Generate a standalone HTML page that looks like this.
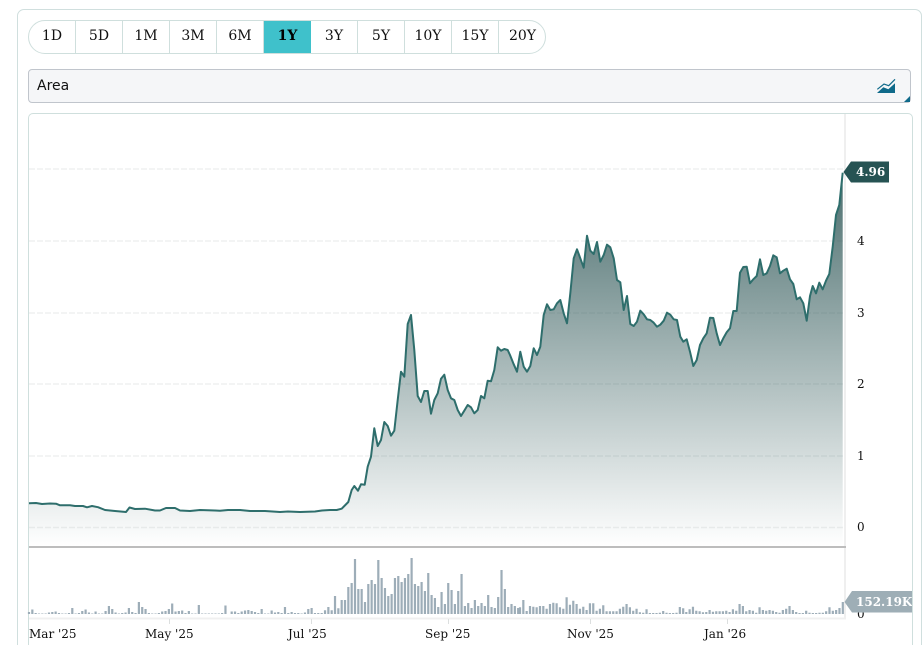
<!DOCTYPE html>
<html><head><meta charset="utf-8"><title>Chart</title>
<style>
html,body{margin:0;padding:0;background:#fff;width:923px;height:645px;overflow:hidden}
#wrap{position:relative;width:923px;height:645px;overflow:hidden;background:#fff}
.a{position:absolute;box-sizing:border-box}
#card{left:17px;top:9px;width:905px;height:660px;border:1px solid #d0dfde;border-radius:7px}
#btns{left:28px;top:20px;height:34px;width:518px;border:1px solid #cfdfdd;border-radius:17px;overflow:hidden;display:flex;background:#fff}
#btns div{width:47px;height:32px;line-height:31px;text-align:center;border-right:1px solid #cfdfdd;box-sizing:border-box;font:14px/31px "DejaVu Serif",serif;color:#111;flex:none}
#btns div:first-child{width:47px}
#btns div:last-child{border-right:0}
#btns .on{background:#3fc1cb;font-weight:bold;color:#000;border-right:0}
#dd{left:28px;top:69px;width:883px;height:34px;background:#f5f6f8;border:1px solid #c0c5cc;border-radius:4px;font:14px/32px "DejaVu Sans",sans-serif;color:#111;padding-left:8px}
#box{left:28px;top:113px;width:885px;height:540px;border:1px solid #cfdfdd;border-radius:5px 5px 0 0}
svg{position:absolute;left:0;top:0}
text{font-family:"DejaVu Serif",serif;font-size:12px;fill:#111}
</style></head><body>
<div id="wrap">
<div class="a" id="card"></div>
<div class="a" id="btns"><div>1D</div><div>5D</div><div>1M</div><div>3M</div><div>6M</div><div class="on">1Y</div><div>3Y</div><div>5Y</div><div>10Y</div><div>15Y</div><div>20Y</div></div>
<div class="a" id="dd">Area</div>
<div class="a" id="box"></div>
<svg width="923" height="645" viewBox="0 0 923 645">
<defs><linearGradient id="g" gradientUnits="userSpaceOnUse" x1="0" y1="172" x2="0" y2="546"><stop offset="0" stop-color="#265050" stop-opacity=".83"/><stop offset="1" stop-color="#265050" stop-opacity="0"/></linearGradient>
<clipPath id="cl"><rect x="840" y="585" width="72" height="30"/></clipPath></defs>
<path d="M877 93L883.3 87.3 888.3 89.3 895 83.3V93Z" fill="#0f6a8a"/>
<path d="M877.3 89.3L884 84 888.7 85.7 895 79.3" fill="none" stroke="#0f6a8a" stroke-width="1.2"/>
<path d="M904 102L910 102 910 96Z" fill="#0f6a8a"/>
<g stroke="#eff1f1" stroke-width="1.5" stroke-dasharray="6 2" fill="none">
<path d="M29 169H844M29 241H844M29 313H844M29 384H844M29 456H844M29 527.5H844"/></g>
<path d="M845 114V618" stroke="#efefef" stroke-width="2"/>
<path d="M29 618.5H846" stroke="#f0f0f0" stroke-width="2"/>
<path d="M29 547H846" stroke="#bdbdbd" stroke-width="2"/>
<g stroke="#dcdfdf" stroke-width="1"><path d="M169.500 619v5M311.500 619v5M448.500 619v5M590.500 619v5M727.500 619v5"/></g>
<path id="ar" fill="url(#g)" d="M29 503.3L36 503 42 504 50 503.5 56 503.7 60 505.3 70 505.3 75 506 83 506 87 507.3 92 506 98 507.2 105 510 115 511 126 512 129.5 507.5 135 509 145 508.7 155 510.5 160 510.5 166 508 175 508 180 510.5 190 511 200 510 215 510.5 220 510.7 228 510 240 510 250 511 265 511 280 512 288 511.5 300 512 315 511.5 322 510.5 330 510 336.7 510 341.7 508.7 348.3 502 351.7 490 354.3 486 358 490.7 361 484.3 364.7 484.7 367.7 466.7 371 456.7 374.3 428.3 377.7 446 381 440 384.3 422 387.7 426 391 435.7 394.3 430.7 397.7 400 401 371.7 404.3 376.7 407.7 324 411 315 414.3 350 417.7 396 421 402 424.3 391 427.7 391 431 413.7 434.3 400 437.7 393.3 441 378.7 444.3 374.7 447.7 390 451 398.3 454.3 400 457.7 410 461 416 464.3 410.7 467.7 405 471 407.3 474.3 413.3 477.7 410 481 396 484.3 398.3 487.7 380.7 491 381.3 494.3 370 497.7 347.3 501 350.7 504.3 349 507.7 350 510 355 513.3 363.3 517 371.7 520.3 351.7 523.7 366.7 527 371.7 530.3 366 533.7 348.3 537 355 540.3 346.7 543.7 315 547 304.3 550.3 310 553.7 309.3 557 303.3 560.3 300 563.7 313.3 567 323.3 570.3 293.3 573.7 258.3 577 249.3 580.3 258.3 583.7 267.7 587 235.7 590.3 250.7 593.7 254 597 242 600.3 261.7 603.7 255 607 244.7 610.3 247.3 613.7 258.3 617 280 620.3 282.3 623.7 310 627 296 630.3 324 633.7 326 637 321.7 640.3 310.7 643.7 314.3 647 319.3 650.3 320 653.7 322.7 657 326.7 660.3 324.7 663.7 320.7 667 312.7 670.3 314.7 673.7 319.3 677 320 680.3 336.7 683.3 341.7 686.7 339.3 690 351.7 693.3 366 696.7 360 700 345 703.3 338.3 706.7 333.3 710 317.7 713.3 318 716.7 333.3 720 345 723.3 338.3 726.7 332.3 730 328.3 733.3 311 736.7 311 740 272.7 743.3 267 746.7 266.7 750 283.3 753.3 279.3 756.7 276 760 259.3 763.3 275 766.7 273.3 770 266 773.3 255.3 776.7 257.3 780 273.3 783.3 270.7 786.7 268.7 790 279.3 793.3 284 796.7 299.3 800 297.3 803.3 303.3 806.7 320.7 810 296 812.7 286 816 293.3 819.3 282.7 822.7 289.3 826 280.7 829.3 274 832.7 246.7 836 215 839.3 205 842.7 172.700V546H29Z"/>
<path fill="none" stroke="#2e6e6c" stroke-width="2" stroke-linejoin="round" d="M29 503.3L36 503 42 504 50 503.5 56 503.7 60 505.3 70 505.3 75 506 83 506 87 507.3 92 506 98 507.2 105 510 115 511 126 512 129.5 507.5 135 509 145 508.7 155 510.5 160 510.5 166 508 175 508 180 510.5 190 511 200 510 215 510.5 220 510.7 228 510 240 510 250 511 265 511 280 512 288 511.5 300 512 315 511.5 322 510.5 330 510 336.7 510 341.7 508.7 348.3 502 351.7 490 354.3 486 358 490.7 361 484.3 364.7 484.7 367.7 466.7 371 456.7 374.3 428.3 377.7 446 381 440 384.3 422 387.7 426 391 435.7 394.3 430.7 397.7 400 401 371.7 404.3 376.7 407.7 324 411 315 414.3 350 417.7 396 421 402 424.3 391 427.7 391 431 413.7 434.3 400 437.7 393.3 441 378.7 444.3 374.7 447.7 390 451 398.3 454.3 400 457.7 410 461 416 464.3 410.7 467.7 405 471 407.3 474.3 413.3 477.7 410 481 396 484.3 398.3 487.7 380.7 491 381.3 494.3 370 497.7 347.3 501 350.7 504.3 349 507.7 350 510 355 513.3 363.3 517 371.7 520.3 351.7 523.7 366.7 527 371.7 530.3 366 533.7 348.3 537 355 540.3 346.7 543.7 315 547 304.3 550.3 310 553.7 309.3 557 303.3 560.3 300 563.7 313.3 567 323.3 570.3 293.3 573.7 258.3 577 249.3 580.3 258.3 583.7 267.7 587 235.7 590.3 250.7 593.7 254 597 242 600.3 261.7 603.7 255 607 244.7 610.3 247.3 613.7 258.3 617 280 620.3 282.3 623.7 310 627 296 630.3 324 633.7 326 637 321.7 640.3 310.7 643.7 314.3 647 319.3 650.3 320 653.7 322.7 657 326.7 660.3 324.7 663.7 320.7 667 312.7 670.3 314.7 673.7 319.3 677 320 680.3 336.7 683.3 341.7 686.7 339.3 690 351.7 693.3 366 696.7 360 700 345 703.3 338.3 706.7 333.3 710 317.7 713.3 318 716.7 333.3 720 345 723.3 338.3 726.7 332.3 730 328.3 733.3 311 736.7 311 740 272.7 743.3 267 746.7 266.7 750 283.3 753.3 279.3 756.7 276 760 259.3 763.3 275 766.7 273.3 770 266 773.3 255.3 776.7 257.3 780 273.3 783.3 270.7 786.7 268.7 790 279.3 793.3 284 796.7 299.3 800 297.3 803.3 303.3 806.7 320.7 810 296 812.7 286 816 293.3 819.3 282.7 822.7 289.3 826 280.7 829.3 274 832.7 246.7 836 215 839.3 205 842.7 172.700"/>
<path fill="none" stroke="#9dadb8" stroke-width="2.2" d="
M29 614v-2m3.33 2v-4.5m3.33 4.5v-1m3.33 1v-.5m3.33 .5v-.5m3.33 .5v-.5m3.33 .5v-1.5m3.33 1.500v-2m3.33 2v-2.500m3.33 2.500v-1m3.33 1v-.5m3.33 .5v-.5m3.33 .5v-1m3.33 1v-6m3.33 6v-.5m3.33 .5v-1m3.33 1v-3m3.33 3v-4.500m3.33 4.500v-1.500m3.33 1.500v-.5m3.33 .5v-2.500m3.33 2.500v-.5m3.33 .5v-.5m3.33 .5v-3m3.33 3v-8m3.33 8v-5m3.33 5v-1.500m3.33 1.500v-.5m3.33 .5v-1m3.33 1v-1.500m3.33 1.500v-6m3.33 6v-2m3.33 2v-1m3.33 1v-12m3.33 12v-7m3.33 7v-5m3.33 5v-1m3.33 1v-.5m3.33 .5v-.5m3.33 .5v-1m3.33 1v-2.500m3.33 2.500v-3m3.33 3v-5m3.33 5v-10.500m3.33 10.500v-2.500m3.33 2.500v-3m3.33 3v-3.500m3.33 3.500v-1m3.33 1v-3m3.33 3v-.5m3.33 .5v-.5m3.33 .5v-9m3.33 9v-.5m3.33 .5v-.5m3.33 .5v-.5m3.33 .5v-.5m3.33 .5v-.5m3.33 .5v-.5m3.33 .5v-1m3.33 1v-8.500
M231.7 614v-2.500m3.33 2.500v-2.500m3.33 2.500v-1m3.33 1v-2.500m3.33 2.500v-3.500m3.33 3.500v-4m3.33 4v-3m3.33 3v-2m3.33 2v-1m3.33 1v-5m3.33 5v-.5m3.33 .5v-.5m3.33 .5v-3.500m3.33 3.500v-1.500m3.33 1.500v-2m3.33 2v-1m3.33 1v-7m3.33 7v-1m3.33 1v-2m3.33 2v-1m3.33 1v-1m3.33 1v-.5m3.33 .5v-1.500m3.33 1.500v-5m3.33 5v-6m3.33 6v-1m3.33 1v-1
M321.7 614v-1m3.33 1v-3.700m3.33 3.700v-7m3.33 7v-3.700m3.33 3.700v-18m3.33 18v-5.700m3.33 5.700v-14m3.33 14v-14m3.33 14v-27m3.33 27v-31m3.33 31v-55m3.33 55v-25m3.33 25v-25m3.33 25v-12m3.33 12v-30m3.33 30v-34m3.33 34v-30m3.33 30v-54m3.33 54v-36m3.33 36v-26m3.33 26v-18m3.33 18v-20m3.33 20v-36m3.33 36v-38m3.33 38v-32m3.33 32v-36m3.33 36v-40m3.33 40v-56m3.33 56v-30m3.33 30v-28m3.33 28v-32m3.33 32v-23m3.33 23v-41m3.33 41v-19m3.33 19v-16m3.33 16v-7m3.33 7v-22m3.33 22v-10m3.33 10v-31m3.33 31v-24m3.33 24v-10m3.33 10v-23m3.33 23v-40m3.33 40v-8m3.33 8v-11m3.33 11v-6m3.33 6v-14m3.33 14v-8m3.33 8v-11m3.33 11v-8m3.33 8v-19m3.33 19v-7m3.33 7v-6m3.33 6v-17m3.33 17v-44m3.33 44v-25m3.33 25v-7m3.33 7v-10m3.33 10v-8m3.33 8v-6
M520 614v-6.700m3.33 6.700v-14m3.33 14v-3m3.33 3v-8m3.33 8v-7.300m3.33 7.300v-6.700m3.33 6.700v-8m3.33 8v-8m3.33 8v-5.300m3.33 5.300v-10m3.33 10v-11.300m3.33 11.300v-10.700m3.33 10.700v-6.700m3.33 6.700v-5.300m3.33 5.300v-16.700m3.33 16.700v-9.300m3.33 9.300v-13.300m3.33 13.300v-10m3.33 10v-5.300m3.33 5.300v-7.300m3.33 7.300v-4m3.33 4v-10.700m3.33 10.700v-10.700m3.33 10.700v-3.300m3.33 3.300v-5.300m3.33 5.300v-8.700m3.33 8.700v-2.700m3.33 2.700v-2.700m3.33 2.700v-2.700m3.33 2.700v-2.700m3.33 2.700v-5.300m3.33 5.300v-7.300m3.33 7.300v-10m3.33 10v-6.700m3.33 6.700v-3.300m3.33 3.300v-5.300m3.33 5.300v-1.700m3.33 1.700v-1.300m3.33 1.300v-4.700m3.33 4.700v-1m3.33 1v-1m3.33 1v-1m3.33 1v-1.300m3.33 1.300v-3m3.33 3v-1.300m3.33 1.300v-1m3.33 1v-1m3.33 1v-1.300m3.33 1.300v-7m3.33 7v-5.700
M686.300 614v-2m3.33 2v-4.700m3.33 4.700v-7.300m3.33 7.300v-3.300m3.33 3.300v-2.700m3.33 2.700v-1.700m3.33 1.700v-2m3.33 2v-4m3.33 4v-2.300m3.33 2.300v-2.700m3.33 2.700v-2.700m3.33 2.700v-2.700m3.33 2.700v-3.300m3.33 3.300v-2m3.33 2v-4.700m3.33 4.700v-3.300m3.33 3.300v-10m3.33 10v-8m3.33 8v-2.700m3.33 2.700v-4m3.33 4v-3.300m3.33 3.300v-1.300m3.33 1.300v-6.700m3.33 6.700v-4m3.33 4v-3.300m3.33 3.300v-4m3.33 4v-3.300m3.33 3.300v-2m3.33 2v-1.300m3.33 1.300v-4m3.33 4v-5.300m3.33 5.300v-8m3.33 8v-4m3.33 4v-2m3.33 2v-1m3.33 1v-1m3.33 1v-3.300m3.33 3.300v-1.300m3.33 1.300v-1m3.33 1v-1m3.33 1v-1.300m3.33 1.300v-1.300m3.33 1.300v-2.700m3.33 2.700v-6.700m3.33 6.700v-3.300m3.33 3.300v-4m3.33 4v-6m3.33 6v-12"/>
<g>
<text x="857" y="245">4</text><text x="857" y="317">3</text><text x="857" y="388">2</text><text x="857" y="460">1</text><text x="857" y="531">0</text><text x="857" y="618">0</text>
<text x="29" y="638">Mar '25</text><text x="145" y="638">May '25</text><text x="288" y="638">Jul '25</text><text x="425" y="638">Sep '25</text><text x="567" y="638">Nov '25</text><text x="704" y="638">Jan '26</text>
</g>
<path d="M843.500 172L851 161.500H889V182.500H851Z" fill="#265353"/>
<text x="856" y="176" style="font-weight:bold;fill:#fff">4.96</text>
<path d="M844.500 602L852 591H912V612.500H852Z" fill="#9eaeb6"/>
<text x="856" y="606" clip-path="url(#cl)" style="font-weight:bold;fill:#fff">152.19K</text>
</svg>
</div>
</body></html>
